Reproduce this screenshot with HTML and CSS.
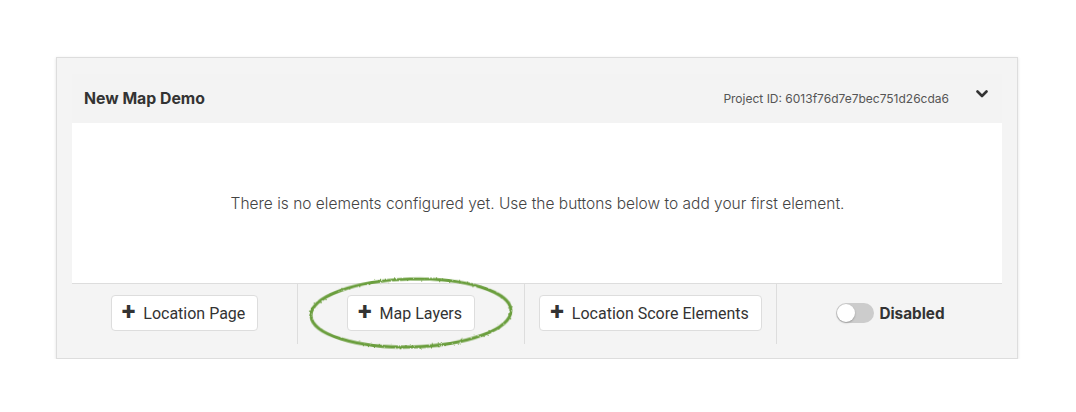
FILE: index.html
```html
<!DOCTYPE html>
<html lang="en">
<head>
  <meta charset="UTF-8" />
  <title>New Map Demo</title>
  <link rel="stylesheet" href="styles.css">
</head>
<body>
  <div class="card">
    <div class="panel">
      <div class="panel-head">
        <h2>New Map Demo</h2>
        <div class="meta">
          <span class="project-id">Project ID: 6013f76d7e7bec751d26cda6</span>
          <svg class="chevron" width="12" height="8" viewBox="0 0 12 8"><path d="M1.5 1.5 L6 6 L10.5 1.5" fill="none" stroke="#333" stroke-width="2.6" stroke-linecap="round" stroke-linejoin="round"/></svg>
        </div>
      </div>
      <div class="panel-body">
        <p>There is no elements configured yet. Use the buttons below to add your first element.</p>
      </div>
      <div class="panel-foot">
        <div class="cell">
          <button class="add-btn"><span class="plus">+</span>Location Page</button>
        </div>
        <div class="cell highlight">
          <button class="add-btn"><span class="plus">+</span>Map Layers</button>
          <svg class="circle-mark" width="210" height="80" viewBox="0 0 210 80">
            <filter id="rough"><feTurbulence type="fractalNoise" baseFrequency="0.9" numOctaves="2" result="n"/><feDisplacementMap in="SourceGraphic" in2="n" scale="2.5"/></filter>
            <ellipse cx="105" cy="40" rx="100" ry="34" fill="none" stroke="#6a9e3c" stroke-width="3" filter="url(#rough)" transform="rotate(-1.5 105 40)"/>
          </svg>
        </div>
        <div class="cell">
          <button class="add-btn"><span class="plus">+</span>Location Score Elements</button>
        </div>
        <div class="cell">
          <label class="toggle"><span class="track"><span class="knob"></span></span>Disabled</label>
        </div>
      </div>
    </div>
  </div>
</body>
</html>
```

FILE: styles.css
```css
body { margin: 0; background: #fff; font-family: Inter, Roboto, "Liberation Sans", sans-serif; color: #333; }
.card {
  width: 930px; margin: 57px 0 0 56px; padding: 16px 15px 14px 15px;
  background: #f4f4f4; border: 1px solid #ddd; box-shadow: 0 1px 3px rgba(0,0,0,0.12);
}
.panel-head {
  display: flex; justify-content: space-between; align-items: center;
  height: 49px; padding: 0 12px; background: #f3f3f3;
}
.panel-head h2 { margin: 0; font-size: 15.8px; font-weight: 700; color: #333; }
.meta { display: flex; align-items: center; gap: 27px; padding-bottom: 1px; }
.project-id { font-size: 12px; color: #555; }
.chevron { margin-bottom: 8px; margin-right: 2px; }
.panel-body {
  background: #fff; height: 160px; display: flex; align-items: center; justify-content: center;
  border-bottom: 1px solid #ddd;
}
.panel-body p { margin: 0 0 0 1px; font-size: 15.5px; font-weight: 300; color: #444; }
.panel-foot { display: grid; grid-template-columns: 225px 227px 252px 226px; height: 60px; }
.cell { display: flex; align-items: center; justify-content: center; border-left: 1px solid #ddd; position: relative; padding-bottom: 2px; }
.cell:first-child { border-left: none; }
.add-btn {
  display: flex; align-items: center; height: 36px; padding: 0 12px 0 10px;
  background: #fff; border: 1px solid #ddd; border-radius: 4px;
  font-family: Roboto, "Liberation Sans", sans-serif; font-size: 16px; color: #333;
}
.plus { font-size: 25px; font-weight: 700; line-height: 1; margin-right: 8px; margin-top: -3px; color: #333; }
.circle-mark { position: absolute; left: 8px; top: -11px; pointer-events: none; }
.toggle { display: flex; align-items: center; gap: 5px; font-size: 15.3px; font-weight: 700; color: #333; padding-left: 2px; }
.track { width: 38px; height: 20px; border-radius: 10px; background: #ccc; position: relative; }
.knob {
  position: absolute; left: 1px; top: 1px; width: 18px; height: 18px; border-radius: 50%;
  background: #fff; box-shadow: 0 1px 2px rgba(0,0,0,0.25);
}
```
